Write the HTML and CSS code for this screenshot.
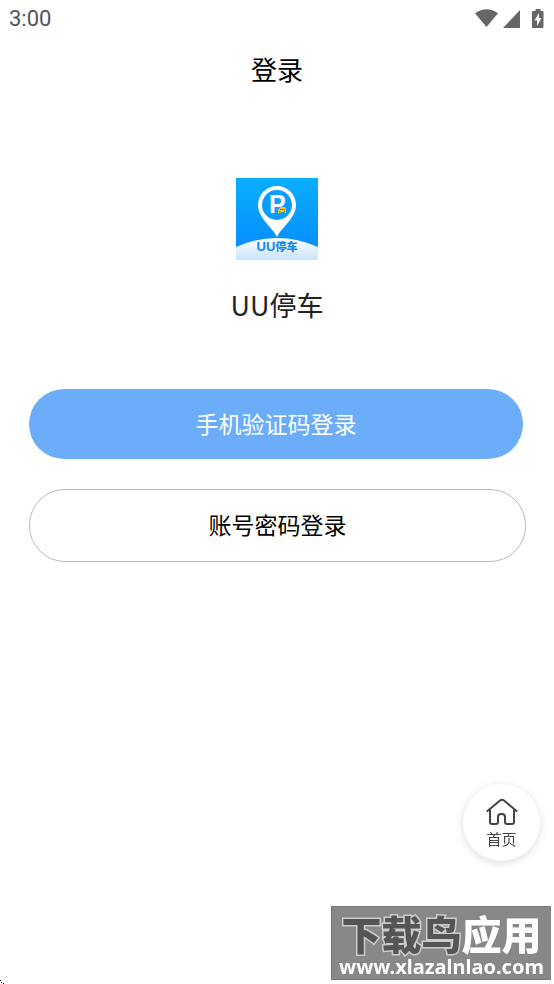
FILE: index.html
```html
<!DOCTYPE html>
<html lang="zh-CN">
<head>
<meta charset="utf-8">
<meta name="viewport" content="width=device-width, initial-scale=1">
<title>登录</title>
<link rel="stylesheet" href="styles.css">
</head>
<body>
<header class="status">
  <span class="clock">3:00</span>
  <svg class="status-icons" width="72" height="20" viewBox="0 0 72 20" fill="#666" aria-hidden="true">
    <path d="M1 4.200Q12.500-3.600 24 4.200L12.500 18Z"/>
    <path d="M29 19 46 1V19Z"/>
    <path d="M61.500 0h5v2h2q1 0 1 1v15q0 1-1 1H59q-1 0-1-1V3q0-1 1-1h2.500Z"/>
    <path fill="#fff" d="M65 4v5h2.500l-4.500 8v-5.500H60.500Z"/>
  </svg>
</header>
<h1 class="title">登录</h1>
<main class="content">
  <svg class="logo" width="82" height="82" viewBox="0 0 82 82" role="img" aria-label="UU停车">
    <defs>
      <linearGradient id="sky" x1="0" y1="0" x2="0" y2="1"><stop stop-color="#09aefe"/><stop offset="1" stop-color="#0789ff"/></linearGradient>
      <linearGradient id="hill" x1="0" y1="0" x2="0" y2="1"><stop stop-color="#fff"/><stop offset="1" stop-color="#c8e4ff"/></linearGradient>
    </defs>
    <path fill="url(#sky)" d="M0 0h82v82H0z"/>
    <path fill="url(#hill)" d="M0 69Q41 51 82 69V82H0Z"/>
    <path fill="#fff" d="M41 59C37 50 22 40 22 27a19 19 0 0 1 38 0C60 40 45 50 41 59Z"/>
    <circle cx="41" cy="27" r="15" fill="#0a9dff"/>
    <text class="logo-letter" x="33" y="35">P</text>
    <path fill="#f3c623" d="m43.500 30 1-1h4l1 1 .5 2v3h-1.500v-1h-4v1H42v-3Z"/>
    <path fill="#4b9460" d="M44 31h5v1h-5zM43 33h1v1h-1zM48 33h1v1h-1z"/>
    <text class="logo-name" x="41" y="73" text-anchor="middle"><tspan class="logo-latin">UU</tspan>停车</text>
  </svg>
  <p class="name">UU停车</p>
  <div class="actions">
    <button class="btn primary" type="button">手机验证码登录</button>
    <button class="btn secondary" type="button">账号密码登录</button>
  </div>
</main>
<a class="home" href="#">
  <svg width="32" height="28" viewBox="0 0 32 28" fill="none" stroke="#444" stroke-width="2" stroke-linecap="round" stroke-linejoin="round" aria-hidden="true">
    <path d="M1.500 13 14 2.500q2-1.500 4 0L30.500 13M4 12v12q0 2 2 2h4q2 0 2-2v-5q0-3 3-3h1q3 0 3 3v5q0 2 2 2h5q2 0 2-2V12"/>
  </svg>
  <span>首页</span>
</a>
<aside class="watermark">
  <span class="brand"><span class="brand-dark">下载鸟</span>应用</span>
  <span class="site">www.xlazalnlao.com</span>
</aside>
<svg class="corner" width="4" height="4" viewBox="0 0 4 4" aria-hidden="true"><path d="M0 0h1v1H0zM1 2h1v1H1zM3 3h1v1H3z"/></svg>
</body>
</html>
```
FILE: styles.css
```css
* { box-sizing: border-box; }
body {
  margin: 0;
  min-height: 100vh;
  background: #fff;
  color: #000;
  font-family: "Noto Sans CJK SC", sans-serif;
}
.status {
  display: flex;
  justify-content: space-between;
  align-items: center;
  height: 38px;
  padding: 0 8px 0 9px;
}
.clock { font: 400 22px/24px Roboto, sans-serif; color: #555; }
.title {
  margin: 11px 0 0;
  font-size: 26px;
  font-weight: 400;
  line-height: 40px;
  text-align: center;
}
.content {
  display: flex;
  flex-direction: column;
  align-items: center;
  padding: 89px 28px 0;
}
.logo { display: block; }
.logo-letter { font: 700 25px "Liberation Sans", sans-serif; fill: #fff; }
.logo-name { font: 900 11px "Noto Sans CJK SC", sans-serif; fill: #1688ed; }
.logo-latin { font: 700 13px "Liberation Sans", sans-serif; }
.name {
  margin: 25px 0 0;
  font-size: 27px;
  line-height: 40px;
  color: #222;
}
.actions {
  display: flex;
  flex-direction: column;
  gap: 30px;
  width: 100%;
  margin-top: 64px;
  padding-left: 1px;
}
.btn {
  border: 0;
  border-radius: 36px;
  font-family: inherit;
  font-size: 23px;
  line-height: 34px;
}
.primary { margin-right: 3px; padding: 17px 18px 19px; background: #6cadf9; color: #fff; }
.secondary { padding: 17px 18px 20px; border: 1px solid #bbb; background: #fff; color: #000; }
.home {
  position: fixed;
  right: 14px;
  bottom: 123px;
  display: flex;
  flex-direction: column;
  align-items: center;
  justify-content: center;
  gap: 2px;
  width: 77px;
  height: 77px;
  padding-top: 3px;
  border-radius: 50%;
  background: #fff;
  box-shadow: 0 2px 8px rgba(0, 0, 0, .14);
  color: #444;
  font-size: 15px;
  line-height: 22px;
  text-decoration: none;
}
.watermark {
  position: fixed;
  right: 3px;
  bottom: 4px;
  display: flex;
  flex-direction: column;
  align-items: center;
  justify-content: space-between;
  padding: 10px 0 0;
  width: 220px;
  height: 74px;
  border: 1px solid #777;
  border-right: 0;
  background: #888;
  color: #fff;
  white-space: nowrap;
}
.brand { font-size: 40px; font-weight: 900; line-height: 32px; }
.brand-dark {
  color: #555;
  -webkit-text-stroke: 3px #ccc;
  paint-order: stroke fill;
}
.site { font: 700 20px/24px "Noto Sans", sans-serif; }
.corner { position: fixed; left: 0; bottom: 0; }
```
